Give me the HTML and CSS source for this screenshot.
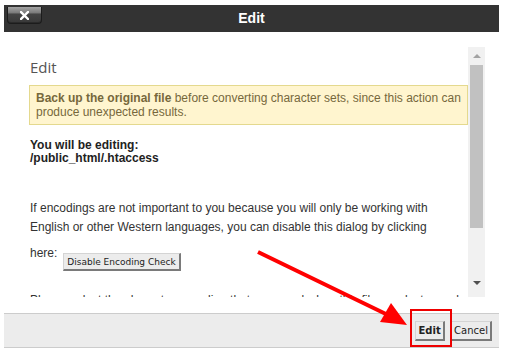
FILE: index.html
```html
<!DOCTYPE html>
<html>
<head>
<meta charset="utf-8">
<link rel="stylesheet" href="styles.css">
</head>
<body>
<div class="dialog">
  <div class="titlebar">
    <div class="close-cell">
      <button class="close-btn" type="button" aria-label="Close">
        <svg width="9" height="9" viewBox="0 0 9 9"><path d="M1 1 L8 8 M8 1 L1 8" stroke="#fff" stroke-width="2.4" stroke-linecap="square"/></svg>
      </button>
    </div>
    <div class="title">Edit</div>
    <div></div>
  </div>
  <div class="body">
    <div class="scroll-area">
      <div class="content">
        <h2 class="heading">Edit</h2>
        <div class="warning"><strong>Back up the original file</strong> before converting character sets, since this action can produce unexpected results.</div>
        <div class="editing">
          <div>You will be editing:</div>
          <div>/public_html/.htaccess</div>
        </div>
        <p class="info">If encodings are not important to you because you will only be working with English or other Western languages, you can disable this dialog by clicking</p>
        <div class="here-row">
          <span>here:</span>
          <button class="btn small" type="button">Disable Encoding Check</button>
        </div>
        <p class="info note">Please select the character encoding that was used when this file was last saved:</p>
      </div>
      <div class="scrollbar">
        <div class="arrow up"></div>
        <div class="track"><div class="thumb"></div></div>
        <div class="arrow down"></div>
      </div>
    </div>
  </div>
  <div class="footer">
    <button class="btn primary" type="button">Edit</button>
    <button class="btn" type="button">Cancel</button>
  </div>
</div>
<div class="annot-box"></div>
<svg class="annot-arrow" width="505" height="352" viewBox="0 0 505 352">
  <line x1="258" y1="252" x2="390" y2="316" stroke="#f00" stroke-width="4"/>
  <polygon points="407,325 380,322 391,303" fill="#f00"/>
</svg>
</body>
</html>
```

FILE: styles.css
```css
html, body {
  margin: 0;
  padding: 0;
  background: #fff;
}
body {
  font-family: "Liberation Sans", Arial, sans-serif;
  font-size: 12px;
  color: #333;
  width: 505px;
  height: 352px;
  overflow: hidden;
  position: relative;
}
.dialog {
  margin: 5px 0 0 4px;
  width: 495px;
  background: #fff;
}
.titlebar {
  height: 27px;
  background: #333333;
  display: grid;
  grid-template-columns: 1fr auto 1fr;
  align-items: start;
}
.close-cell {
  padding: 2px 0 0 3px;
}
.close-btn {
  display: flex;
  align-items: center;
  justify-content: center;
  width: 35px;
  height: 17px;
  padding: 0;
  margin: 0;
  border: 1px solid #1c1c1c;
  border-top: none;
  border-radius: 0 0 4px 4px;
  background: linear-gradient(#a4a4a4 0%, #7c7c7c 35%, #444 45%, #383838 100%);
  box-shadow: inset 0 -1px 0 #2a2a2a;
}
.title {
  color: #fff;
  font-weight: bold;
  font-size: 14px;
  line-height: 27px;
}
.body {
  height: 281px;
  padding: 15px 14px 0 25px;
  box-sizing: border-box;
}
.scroll-area {
  display: flex;
  height: 250px;
}
.content {
  flex: 1;
  overflow: hidden;
  padding-top: 10px;
}
.heading {
  margin: 0 0 8px 1px;
  font-family: "Open Sans", sans-serif;
  font-weight: normal;
  font-size: 15px;
  line-height: 20px;
  color: #555;
}
.warning {
  background: #fff5cf;
  border: 1px solid #e4d98e;
  color: #76683c;
  padding: 5px 6px;
  line-height: 14px;
}
.warning strong {
  font-weight: bold;
}
.editing {
  margin: 14px 0 0 1px;
  font-weight: bold;
  color: #222;
  line-height: 13px;
}
.info {
  margin: 34px 0 0 1px;
  line-height: 19px;
}
.here-row {
  display: flex;
  align-items: flex-start;
  margin: 7px 0 0 1px;
  line-height: 19px;
}
.here-row .btn {
  margin: 9px 0 0 6px;
}
.note {
  margin-top: 20px;
}
.btn {
  font-family: "DejaVu Sans", Verdana, sans-serif;
  font-size: 10px;
  color: #222;
  background: #ececec;
  border-style: solid;
  border-width: 1px 2px 2px 1px;
  border-color: #d4d4d4 #7a7a7a #7a7a7a #d4d4d4;
  padding: 0 2px;
  margin: 0;
  height: 20px;
  line-height: 16px;
}
.btn.small {
  font-size: 9px;
  height: 18px;
  line-height: 14px;
  padding: 0 3px;
}
.btn.primary {
  font-weight: bold;
  width: 30px;
  padding: 0;
}
.scrollbar {
  width: 17px;
  background: #f1f1f1;
  display: flex;
  flex-direction: column;
}
.arrow {
  height: 17px;
  display: flex;
  align-items: center;
  justify-content: center;
}
.arrow::before {
  content: "";
  border-left: 4px solid transparent;
  border-right: 4px solid transparent;
}
.arrow.up::before {
  border-bottom: 4px solid #a3a3a3;
}
.arrow.down::before {
  border-top: 4px solid #505050;
}
.arrow.down {
  height: 16px;
  align-items: flex-start;
  padding-top: 0;
}
.track {
  flex: 1;
  padding: 1px 2px 0 2px;
}
.thumb {
  height: 163px;
  background: #c1c1c1;
}
.footer {
  background: #ececec;
  border-top: 1px solid #cccccc;
  border-bottom: 1px solid #cccccc;
  height: 33px;
  box-sizing: content-box;
  display: flex;
  justify-content: flex-end;
  align-items: flex-start;
  gap: 6px;
  padding: 7px 7px 0 0;
  box-sizing: border-box;
  height: 35px;
}
.annot-box {
  position: absolute;
  left: 410px;
  top: 309px;
  width: 38px;
  height: 34px;
  border: 2px solid #ee0000;
}
.annot-arrow {
  position: absolute;
  left: 0;
  top: 0;
  pointer-events: none;
}
```
